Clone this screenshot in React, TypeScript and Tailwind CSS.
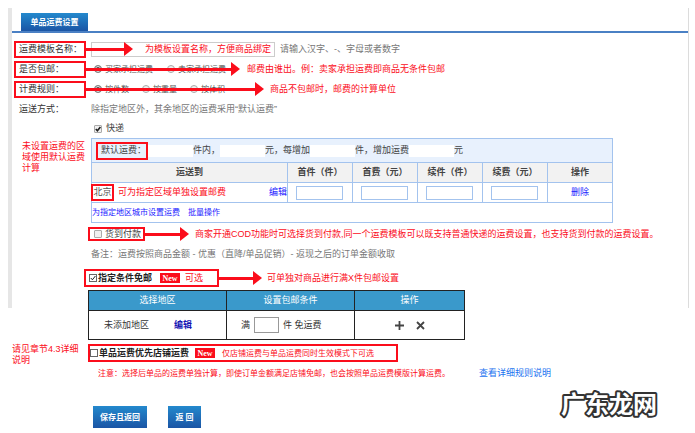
import React from "react";
import clsx from "clsx";

const BOX = "border-2 border-[#fb0d1b]";
const BLUE_CELL = "border border-[#a3c3ee]";
const DARK_CELL = "border border-[#222]";

function Arrow({ className }: { className: string }) {
  return (
    <span className={clsx("flex items-center", className)} aria-hidden="true">
      <span className="h-[3px] grow bg-[#fb0d1b]" />
      <svg width="9" height="14" viewBox="0 0 9 14" className="shrink-0">
        <path d="M0 0L9 7L0 14Z" fill="#fb0d1b" />
      </svg>
    </span>
  );
}

function Note({ className, children }: { className?: string; children: React.ReactNode }) {
  return <span className={clsx("text-[9px] text-[#fb0d1b]", className)}>{children}</span>;
}

function RowLabel({ boxed, htmlFor, children }: { boxed?: boolean; htmlFor?: string; children: React.ReactNode }) {
  return (
    <label
      htmlFor={htmlFor}
      className={clsx(
        "mr-[5px] flex h-[17px] w-[72px] shrink-0 items-center border-2 pl-[3px] text-[9px] text-[#333]",
        boxed ? "border-[#fb0d1b]" : "border-transparent",
      )}
    >
      {children}
    </label>
  );
}

function Radio({ name, label, checked, className }: { name: string; label: string; checked?: boolean; className?: string }) {
  return (
    <label className={clsx("flex items-center gap-[3px] text-[8px] text-[#555]", className)}>
      <input
        type="radio"
        name={name}
        defaultChecked={checked}
        className="size-2 appearance-none rounded-full border border-[#aaa] bg-[#eee] checked:border-[#888] checked:bg-[#444] checked:shadow-[inset_0_0_0_1px_#eee]"
      />
      {label}
    </label>
  );
}

function Check({ id, checked, dark }: { id: string; checked?: boolean; dark?: boolean }) {
  return (
    <span className="relative flex size-2 shrink-0">
      <input
        id={id}
        type="checkbox"
        defaultChecked={checked}
        className={clsx(
          "peer size-2 appearance-none border",
          dark ? "border-[#666] bg-white" : "rounded-[1px] border-[#aaa] bg-[#f0f0f0]",
        )}
      />
      <svg
        viewBox="0 0 8 8"
        className="pointer-events-none absolute inset-0 hidden size-2 peer-checked:block"
        fill="none"
        stroke="#222"
        strokeWidth={dark ? 1 : 1.6}
      >
        <path d="M1.8 4L3.4 5.8L6.4 2" />
      </svg>
    </span>
  );
}

function NewBadge() {
  return (
    <span className="flex h-[10px] w-5 items-center justify-center bg-[#fb0d1b] font-['Liberation_Serif',serif] text-[8px] font-bold text-white">
      New
    </span>
  );
}

function FeeInput({ label }: { label: string }) {
  return <input aria-label={label} className="h-3 w-[45px] bg-white px-1 text-[9px]" />;
}

const feeColumns = ["首件（件）", "首费（元）", "续件（件）", "续费（元）"];

export default function App() {
  return (
    <div className="relative overflow-hidden bg-white pb-1 font-['Liberation_Sans','Noto_Sans_CJK_SC',sans-serif] text-[9px] leading-[11px] whitespace-nowrap text-[#444]">
      <div className="pointer-events-none absolute top-2 right-[6px] left-2 h-[300px] border-r border-l-4 border-r-[#dcdcdc] border-l-[#e6e6e6]" />

      <header className="mr-[7px] ml-3 border-b-2 border-[#4a80c4] pt-[13px] pl-[9px]">
        <h1 className="flex h-[18px] w-[67px] items-center justify-center bg-linear-to-b from-[#2489cd] to-[#1b55a5] text-[8px] font-bold text-white">
          单品运费设置
        </h1>
      </header>

      <form className="pt-[6px]" onSubmit={(e) => e.preventDefault()}>
        <div className="relative flex h-5 items-center pl-[14px]">
          <RowLabel boxed htmlFor="tpl-name">运费模板名称：</RowLabel>
          <input id="tpl-name" className="h-[15px] w-[184px] border border-[#ccc] bg-white px-1" />
          <span className="ml-[5px] text-[#777]">请输入汉字、-、字母或者数字</span>
          <Arrow className="absolute left-[86px] w-[47px]" />
          <Note className="absolute left-[145px]">为模板设置名称，方便商品绑定</Note>
        </div>

        <div className="relative flex h-5 items-center pl-[14px]">
          <RowLabel boxed>是否包邮：</RowLabel>
          <Radio name="payer" label="买家承担运费" checked className="ml-[3px] w-[73px]" />
          <Radio name="payer" label="卖家承担运费" />
          <Arrow className="absolute left-[86px] w-[154px]" />
          <Note className="absolute left-[247px]">邮费由谁出。例：卖家承担运费即商品无条件包邮</Note>
        </div>

        <div className="relative flex h-5 items-center pl-[14px]">
          <RowLabel boxed>计费规则：</RowLabel>
          <Radio name="rule" label="按件数" checked className="ml-[3px] w-12" />
          <Radio name="rule" label="按重量" className="w-12" />
          <Radio name="rule" label="按体积" />
          <Arrow className="absolute left-[86px] w-[178px]" />
          <Note className="absolute left-[270px]">商品不包邮时，邮费的计算单位</Note>
        </div>

        <div className="flex h-5 items-center pl-[14px]">
          <RowLabel>运送方式：</RowLabel>
          <span className="text-[#777]">除指定地区外，其余地区的运费采用“默认运费”</span>
        </div>

        <div className="flex h-[19px] items-center gap-1 pl-[94px]">
          <Check id="express" checked />
          <label htmlFor="express">快递</label>
        </div>

        <div className="flex pl-[22px]">
          <p className="w-[69px] shrink-0 pt-[3px] text-[#fb0d1b]">
            未设置运费的区
            <br />
            域使用默认运费
            <br />
            计算
          </p>
          <table className="w-full max-w-[522px] table-fixed border-collapse">
            <colgroup>
              <col />
              <col className="w-[65px]" />
              <col className="w-[65px]" />
              <col className="w-[65px]" />
              <col className="w-[65px]" />
              <col className="w-[65px]" />
            </colgroup>
            <tbody>
              <tr className="h-6 bg-[#e8f1fd]">
                <td colSpan={6} className={clsx(BLUE_CELL, "p-0 pl-1")}>
                  <div className="flex items-center">
                    <span className={clsx(BOX, "flex h-[18px] w-[52px] items-center pl-[3px]")}>默认运费：</span>
                    <FeeInput label="默认件数" />
                    件内，
                    <FeeInput label="默认运费" />
                    元，每增加
                    <FeeInput label="每增加件数" />
                    件，增加运费
                    <FeeInput label="增加运费" />元
                  </div>
                </td>
              </tr>
              <tr className="h-5 bg-[#f2f2f2] text-[#444]">
                <th className={clsx(BLUE_CELL, "p-0 font-bold")}>运送到</th>
                {feeColumns.map((c) => (
                  <th key={c} className={clsx(BLUE_CELL, "p-0 font-bold")}>{c}</th>
                ))}
                <th className={clsx(BLUE_CELL, "p-0 font-bold")}>操作</th>
              </tr>
              <tr className="h-5">
                <td className={clsx(BLUE_CELL, "p-0")}>
                  <div className="-ml-px flex items-center">
                    <span className={clsx(BOX, "flex h-[17px] w-[23px] items-center justify-center text-[#555]")}>北京</span>
                    <Note className="ml-1">可为指定区域单独设置邮费</Note>
                    <a href="#edit" className="ml-auto text-[#1a1aff]">编辑</a>
                  </div>
                </td>
                {feeColumns.map((c) => (
                  <td key={c} className={clsx(BLUE_CELL, "p-0")}>
                    <input aria-label={c} className="mx-auto block h-[14px] w-[47px] border border-[#a3c3ee] px-1" />
                  </td>
                ))}
                <td className={clsx(BLUE_CELL, "p-0 text-center")}>
                  <a href="#delete" className="text-[#1a1aff]">删除</a>
                </td>
              </tr>
              <tr className="h-5">
                <td colSpan={6} className={clsx(BLUE_CELL, "p-0")}>
                  <div className="flex gap-2 text-[8px] text-[#1a1aff]">
                    <a href="#city">为指定地区城市设置运费</a>
                    <a href="#batch">批量操作</a>
                  </div>
                </td>
              </tr>
            </tbody>
          </table>
        </div>

        <div className="flex h-[22px] items-center pl-[88px]">
          <div className={clsx(BOX, "flex h-[14px] w-[57px] items-center gap-[3px] pl-1")}>
            <Check id="cod" />
            <label htmlFor="cod">货到付款</label>
          </div>
          <Arrow className="w-11 shrink-0" />
          <Note className="ml-[6px]">
            商家开通COD功能时可选择货到付款,同一个运费模板可以既支持普通快递的运费设置，也支持货到付款的运费设置。
          </Note>
        </div>

        <p className="flex h-[18px] items-center pl-[91px] text-[#777]">
          备注：运费按照商品金额 - 优惠（直降/单品促销）- 返现之后的订单金额收取
        </p>

        <div className="flex items-center pt-[6px] pl-[84px]">
          <div className={clsx(BOX, "flex h-[18px] w-[135px] items-center pl-[3px]")}>
            <Check id="free" checked dark />
            <label htmlFor="free" className="mr-2 ml-px font-bold text-[#222]">指定条件免邮</label>
            <NewBadge />
            <Note className="ml-[5px]">可选</Note>
          </div>
          <Arrow className="w-[43px]" />
          <Note className="ml-[5px]">可单独对商品进行满X件包邮设置</Note>
        </div>

        <div className="pt-[3px] pl-[88px]">
          <table className="w-full max-w-[377px] table-fixed border-collapse text-[#333]">
            <colgroup>
              <col />
              <col className="w-[128px]" />
              <col className="w-[110px]" />
            </colgroup>
            <thead>
              <tr className="h-5 bg-[#3a99cb] text-white">
                <th className={clsx(DARK_CELL, "p-0 font-normal")}>选择地区</th>
                <th className={clsx(DARK_CELL, "p-0 font-normal")}>设置包邮条件</th>
                <th className={clsx(DARK_CELL, "p-0 font-normal")}>操作</th>
              </tr>
            </thead>
            <tbody>
              <tr className="h-[29px]">
                <td className={clsx(DARK_CELL, "p-0 pl-[15px]")}>
                  未添加地区
                  <a href="#region" className="ml-[25px] font-bold text-[#1414b4]">编辑</a>
                </td>
                <td className={clsx(DARK_CELL, "p-0 pl-[14px]")}>
                  <label className="flex items-center gap-1">
                    满
                    <input className="h-4 w-[25px] border border-[#999] px-1" />
                    件 免运费
                  </label>
                </td>
                <td className={clsx(DARK_CELL, "p-0")}>
                  <div className="flex items-center justify-center gap-3">
                    <button type="button" aria-label="添加">
                      <svg width="9" height="9" viewBox="0 0 9 9" stroke="#444" strokeWidth="1.8">
                        <path d="M4.5 0V9M0 4.5H9" />
                      </svg>
                    </button>
                    <button type="button" aria-label="移除">
                      <svg width="9" height="9" viewBox="0 0 9 9" stroke="#444" strokeWidth="1.8">
                        <path d="M1 1L8 8M8 1L1 8" />
                      </svg>
                    </button>
                  </div>
                </td>
              </tr>
            </tbody>
          </table>
        </div>

        <div className="flex pt-1 pl-3">
          <p className="w-[76px] shrink-0 text-[#fb0d1b]">
            请见章节4.3详细
            <br />
            说明
          </p>
          <div>
            <div className={clsx(BOX, "flex h-[18px] w-[310px] items-center")}>
              <Check id="first" dark />
              <label htmlFor="first" className="mr-[6px] ml-px font-bold text-[#222]">单品运费优先店铺运费</label>
              <NewBadge />
              <span className="ml-[7px] text-[8px] text-[#fb0d1b]">仅店铺运费与单品运费同时生效模式下可选</span>
            </div>
            <div className="flex h-[23px] items-center pl-[10px]">
              <p className="w-[381px] text-[8px] text-[#fb0d1b]">
                注意：选择后单品的运费单独计算，即使订单金额满足店铺免邮，也会按照单品运费模版计算运费。
              </p>
              <a href="#rules" className="text-[#1a73f0]">查看详细规则说明</a>
            </div>
          </div>
        </div>

        <div className="flex gap-[21px] pt-[21px] pl-[93px] text-[8px] font-bold text-white">
          <button type="submit" className="h-[22px] w-[54px] bg-linear-to-b from-[#2489cd] to-[#1b55a5]">保存且返回</button>
          <button type="button" className="h-[22px] w-[33px] bg-linear-to-b from-[#2489cd] to-[#1b55a5]">返 回</button>
        </div>
      </form>

      <svg width="104" height="44" viewBox="0 0 104 44" className="absolute right-[34px] bottom-[7px]">
        <text
          x="4"
          y="32"
          fontSize="24"
          fontWeight="700"
          fill="#fff"
          stroke="#333"
          strokeWidth="4"
          strokeLinejoin="round"
          paintOrder="stroke"
          className="font-['Noto_Sans_CJK_SC',sans-serif]"
        >
          广东龙网
        </text>
      </svg>
    </div>
  );
}
